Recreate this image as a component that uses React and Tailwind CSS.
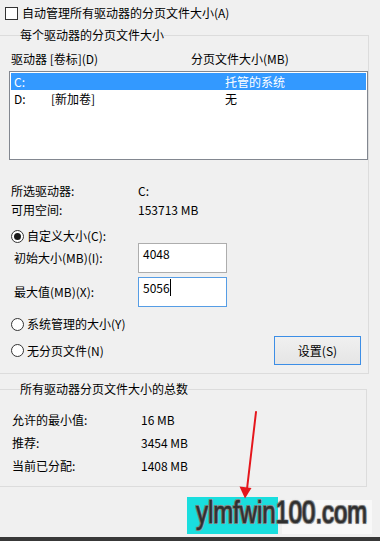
const font = "font-['Microsoft_YaHei','Noto_Sans_CJK_SC',sans-serif]";

/* ---------- small win32 controls ---------- */

function CheckBox() {
  return <span className="block w-[13px] h-[13px] border border-[#333333] bg-white shrink-0" />;
}

function Radio({ checked }) {
  return (
    <span className="flex items-center justify-center w-[13px] h-[13px] rounded-full border border-[#333333] bg-white shrink-0">
      {checked && <span className="block w-[7px] h-[7px] rounded-full bg-[#1a1a1a]" />}
    </span>
  );
}

function TextBox({ value, focused }) {
  return (
    <div
      className={`w-[89px] h-[30px] bg-white border pl-[4px] pt-[2px] leading-[16px] flex items-start ${
        focused ? "border-[#569de5]" : "border-[#adadad]"
      }`}
    >
      <span>{value}</span>
      {focused && <span className="block w-px h-[17px] bg-black mt-[-1px]" />}
    </div>
  );
}

function Row({ label, value, labelX = "ml-[2px]", valueW = "w-[127px]", h = "h-[19px]" }) {
  return (
    <div className={`flex items-center ${h}`}>
      <span className={`${labelX} ${valueW} shrink-0`}>{label}</span>
      <span>{value}</span>
    </div>
  );
}

/* ---------- page ---------- */

export default function App() {
  const drives = [
    { d: "C:", label: "", size: "托管的系统", selected: true },
    { d: "D:", label: "[新加卷]", size: "无" },
  ];

  return (
    <div className={`relative w-[380px] h-[541px] overflow-hidden bg-[#f0f0f0] text-[12px] leading-[16px] text-black flex flex-col ${font}`}>
      {/* top checkbox */}
      <div className="h-[26px] flex items-center pl-[5px] gap-[4px]">
        <CheckBox />
        <span>自动管理所有驱动器的分页文件大小(A)</span>
      </div>

      {/* per drive group */}
      <fieldset className="mt-[1px] ml-[-4px] w-[371px] border border-[#dcdcdc] pl-[12px] pr-0 pb-[8px]">
        <legend className="ml-[11px] px-0 leading-[16px]">每个驱动器的分页文件大小</legend>

        <div className="mt-[8px] flex h-[16px]">
          <span className="ml-[2px] w-[180px]">驱动器 [卷标](D)</span>
          <span>分页文件大小(MB)</span>
        </div>

        <div className="mt-[4px] w-[359px] h-[89px] border border-[#828790] bg-white p-px">
          {drives.map(r => (
            <div
              key={r.d}
              className={`flex items-center h-[17px] pl-[3px] ${r.selected ? "bg-[#3399ff] text-white" : ""}`}
            >
              <span className="w-[37px]">{r.d}</span>
              <span className="w-[174px]">{r.label}</span>
              <span>{r.size}</span>
            </div>
          ))}
        </div>

        <div className="mt-[21px]">
          <Row label="所选驱动器:" value="C:" />
          <Row label="可用空间:" value="153713 MB" />
        </div>

        <div className="mt-[10px] h-[14px] flex items-center gap-[3px] ml-[2px]">
          <Radio checked />
          <span>自定义大小(C):</span>
        </div>

        <div className="flex items-center">
          <span className="ml-[5px] w-[124px]">初始大小(MB)(I):</span>
          <TextBox value="4048" />
        </div>
        <div className="mt-[4px] flex items-center">
          <span className="ml-[5px] w-[124px]">最大值(MB)(X):</span>
          <TextBox value="5056" focused />
        </div>

        <div className="mt-[9px] h-[16px] flex items-center gap-[3px] ml-[2px]">
          <Radio />
          <span>系统管理的大小(Y)</span>
        </div>

        <div className="mt-[4px] flex items-center justify-between pr-[7px]">
          <div className="flex items-center gap-[3px] ml-[2px]">
            <Radio />
            <span>无分页文件(N)</span>
          </div>
          <button className="w-[87px] h-[29px] border border-[#3c8ee6] bg-gradient-to-b from-[#f0f0f0] to-[#e5e5e5] text-black">
            设置(S)
          </button>
        </div>
      </fieldset>

      {/* totals group */}
      <fieldset className="mt-[7px] ml-[-4px] w-[371px] border border-[#dcdcdc] pl-[12px] pr-0 pb-[9px]">
        <legend className="ml-[11px] px-0 leading-[16px]">所有驱动器分页文件大小的总数</legend>
        <div className="mt-[11px]">
          <Row label="允许的最小值:" value="16 MB" labelX="ml-[3px]" valueW="w-[129px]" h="h-[23px]" />
          <Row label="推荐:" value="3454 MB" labelX="ml-[3px]" valueW="w-[129px]" h="h-[23px]" />
          <Row label="当前已分配:" value="1408 MB" labelX="ml-[3px]" valueW="w-[129px]" h="h-[23px]" />
        </div>
      </fieldset>

      <div className="flex-1" />
      <div className="h-[4px] bg-[#383838]" />

      {/* watermark */}
      <div className="absolute left-[187px] top-[497px] w-[91px] h-[37px] bg-[#19dede]" />
      <div className="absolute left-[282px] top-[500px] w-[90px] h-[34px] bg-white/50" />
      <div className="absolute left-[196px] top-[497px] w-[240px] origin-left scale-x-[0.77] font-['Liberation_Sans',Arial,sans-serif] text-[31px] leading-[31px] text-[#2f2f2f] [-webkit-text-stroke:0.6px_#2f2f2f] [text-shadow:1px_1px_0_#8c8c8c,-1px_-1px_0_#8c8c8c,1px_-1px_0_#8c8c8c,-1px_1px_0_#8c8c8c,0_0_3px_#9a9a9a]">
        ylmfwin100.com
      </div>

      {/* red arrow */}
      <svg className="absolute left-0 top-0" width="380" height="541" viewBox="0 0 380 541">
        <path d="M256 412 L247 489" stroke="#e5161c" strokeWidth="2" strokeLinecap="round" fill="none" />
        <path d="M239.5 486.5 L251.5 488 L245 498.5 Z" fill="#e5161c" />
      </svg>
    </div>
  );
}
